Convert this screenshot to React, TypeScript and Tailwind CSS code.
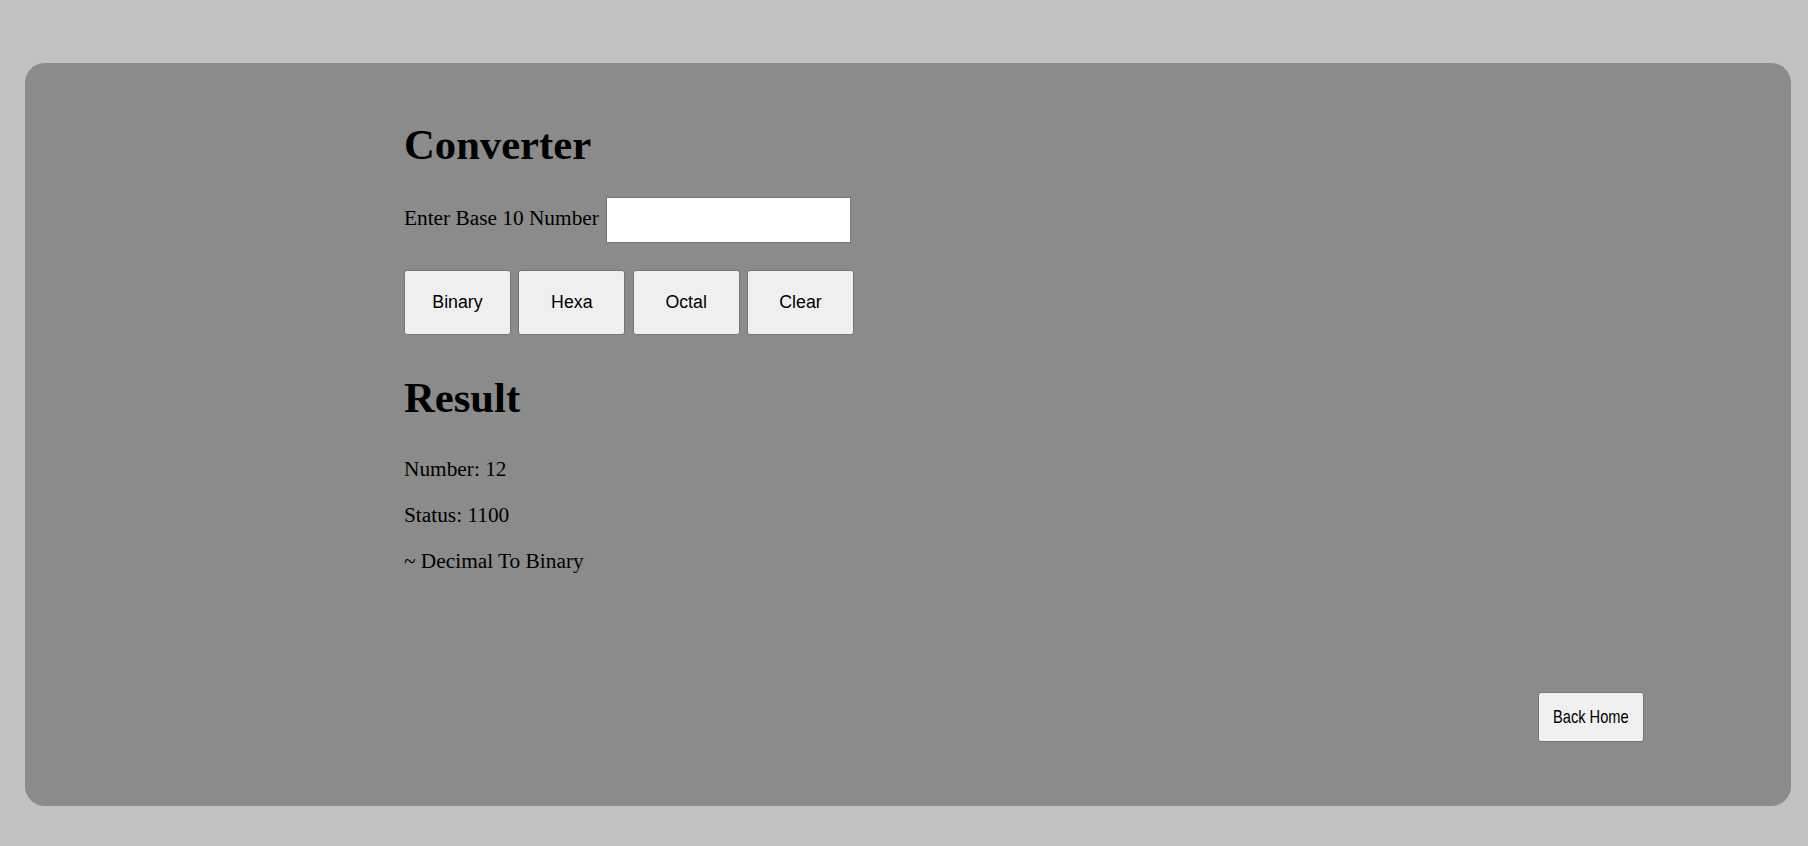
export default function App() {
  const buttons = ["Binary", "Hexa", "Octal", "Clear"];

  return (
    <div className="min-h-screen w-full bg-[#c1c1c1] pt-[63px] pb-[40px]">
      <div className="ml-[25px] flex h-[743px] w-[1766px] flex-col rounded-[20px] bg-[#8b8b8b] pt-[58px] pl-[379px] font-['Liberation_Serif',serif] text-black">
        <h1 className="text-[42.67px] font-bold leading-[48px]">Converter</h1>

        <div className="mt-[28px] flex items-start gap-[7px]">
          <label className="mt-[9px] text-[21.33px] leading-[24px]">Enter Base 10 Number</label>
          <input
            type="text"
            className="h-[46px] w-[245px] border border-[#767676] bg-white px-2 text-[21px] outline-none"
          />
        </div>

        <div className="mt-[27px] flex gap-[7.33px]">
          {buttons.map((label) => (
            <button
              key={label}
              className="h-[65px] w-[107px] rounded-[3px] border border-[#767676] bg-[#efefef] font-['Liberation_Sans',sans-serif] text-[17.78px] text-black"
            >
              {label}
            </button>
          ))}
        </div>

        <h1 className="mt-[39px] text-[42.67px] font-bold leading-[48px]">Result</h1>

        <div className="mt-[35px] flex flex-col gap-[22px] text-[21.33px] leading-[24px]">
          <p>Number: 12</p>
          <p>Status: 1100</p>
          <p>~ Decimal To Binary</p>
        </div>

        <div className="mt-auto flex justify-end pr-[147px] pb-[64px]">
          <button className="flex h-[50px] w-[106px] items-center justify-center rounded-[3px] border border-[#767676] bg-[#f0f0f0] font-['Liberation_Sans',sans-serif] text-[18.5px] text-black">
            <span className="inline-block scale-x-[0.79] whitespace-nowrap">Back Home</span>
          </button>
        </div>
      </div>
    </div>
  );
}
